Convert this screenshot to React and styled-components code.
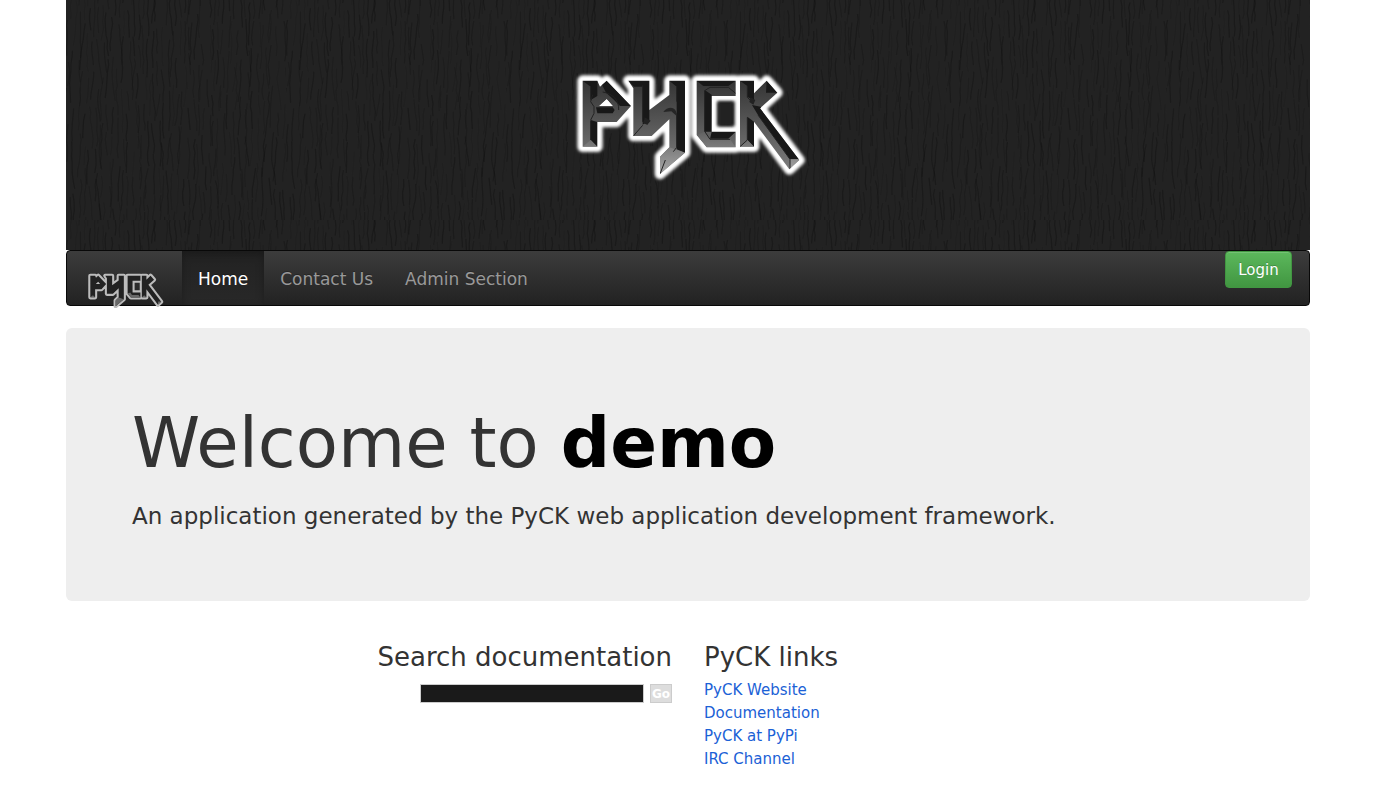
import React from 'react';
import styled, { createGlobalStyle } from 'styled-components';

const GlobalStyle = createGlobalStyle`
  *, *::before, *::after { box-sizing: border-box; }
  body {
    margin: 0;
    background: #fff;
    color: #333;
    font-family: Verdana, "DejaVu Sans", sans-serif;
    font-size: 15px;
    line-height: 23px;
  }
`;

const Page = styled.div`
  padding: 0 80px 24px 66px;
`;

const Banner = styled.header`
  position: relative;
  display: flex;
  align-items: center;
  justify-content: center;
  height: 250px;
  background: #222;
`;

const Grain = styled.svg`
  position: absolute;
  inset: 0;
  width: 100%;
  height: 100%;
`;

const BannerLogo = styled.svg`
  position: relative;
  width: 260px;
  height: 130px;
`;

const Navbar = styled.nav`
  display: flex;
  align-items: stretch;
  height: 56px;
  padding: 0 17px 0 20px;
  border: 1px solid #080808;
  border-radius: 4px;
  background: linear-gradient(#3c3c3c, #222);
`;

const Brand = styled.a`
  width: 95px;
  padding-top: 21px;
`;

const BrandLogo = styled.svg`
  display: block;
  width: 78px;
  height: 36px;
`;

const NavList = styled.ul`
  display: flex;
  flex: 1;
  margin: 0;
  padding: 0;
  list-style: none;
`;

const NavLink = styled.a`
  display: block;
  height: 100%;
  padding: 0 16px;
  font-size: 17px;
  line-height: 56px;
  text-decoration: none;
  text-shadow: 0 -1px 0 rgba(0, 0, 0, 0.25);
  color: ${(p) => (p.$active ? '#fff' : '#999')};
  background: ${(p) => (p.$active ? 'linear-gradient(#222, #282828)' : 'none')};
  box-shadow: ${(p) => (p.$active ? 'inset 0 3px 9px rgba(0, 0, 0, 0.25)' : 'none')};
`;

const LoginButton = styled.button`
  align-self: flex-start;
  min-width: 67px;
  height: 37px;
  padding: 0 12px;
  border: 1px solid #419641;
  border-radius: 4px;
  background: linear-gradient(#5cb85c, #419641);
  box-shadow: inset 0 1px 0 rgba(255, 255, 255, 0.15);
  color: #fff;
  font: 15px Verdana, "DejaVu Sans", sans-serif;
  text-shadow: 0 -1px 0 rgba(0, 0, 0, 0.2);
`;

const Hero = styled.section`
  margin-top: 22px;
  padding: 77px 66px 65px;
  border-radius: 6px;
  background: #eee;
`;

const HeroTitle = styled.h1`
  margin: 0 0 16px;
  font-size: 69px;
  font-weight: 400;
  line-height: 76px;

  strong { color: #000; }
`;

const HeroText = styled.p`
  margin: 0;
  font-size: 23px;
  line-height: 39px;
`;

const Columns = styled.main`
  display: flex;
  gap: 32px;
  margin-top: 39px;
`;

const SearchColumn = styled.section`
  flex: 0 0 606px;
  text-align: right;
`;

const LinksColumn = styled.section`
  flex: 1;
`;

const ColumnTitle = styled.h2`
  margin: 0 0 5px;
  font-size: 26px;
  font-weight: 400;
  line-height: 34px;
`;

const SearchForm = styled.form`
  display: flex;
  justify-content: flex-end;
  gap: 6px;
  padding-top: 5px;
`;

const SearchInput = styled.input`
  width: 224px;
  height: 19px;
  padding: 0 2px;
  border: 1px solid #ccc;
  background: #1a1a1a;
  color: #ccc;
  font-size: 12px;
`;

const GoButton = styled.button`
  width: 22px;
  height: 19px;
  padding: 0;
  border: 1px solid #ccc;
  background: #ddd;
  color: #fff;
  font: bold 12px Verdana, "DejaVu Sans", sans-serif;
`;

const LinkList = styled.ul`
  margin: 0;
  padding: 0;
  list-style: none;
`;

const DocLink = styled.a`
  color: #1b61d6;
  text-decoration: none;
`;

const letters = [
  'M68 62H112L120 80L140 62L213 138L170 186H112V260H68Z M118 138H158L140 118Z',
  'M205 62H268V150L328 105V62H375V278L300 342V290L328 262V178L275 228H220V85Z',
  'M410 62H527V108H455V215H527V262H440L410 225Z',
  'M540 62H582V100L620 62L652 98L600 145L718 300L688 328L582 185V260H540Z',
].join(' ');

/* faces in shadow */
const darkFaces =
  'M68 62H112V108L92 120V80Z M126 74L140 62L213 138H180L160 118L138 98Z M92 180L112 186V260L92 240Z M108 142H158L164 150L158 160H112Z M205 62H268V180L248 194V80H222Z M375 62V278L350 268V78Z M328 62H375L350 80Z M410 62H527L505 78H430Z M434 90L455 104V215H434Z M455 215H527L505 236H450Z M540 62H582V122L562 110V78Z M582 185V260L562 240V170Z M620 62L652 98L618 98Z M576 135L602 140L718 298H690L594 165Z';

/* faces that catch the most light */
const lightFaces =
  'M68 260L92 240L112 260Z M300 290L328 262L375 278L300 342Z M410 225L434 215L450 238H510L527 262H440Z M540 260L562 240L582 260Z M690 298H718L688 328Z';

const edges =
  'M92 80V118M92 182V240M98 104L92 125L102 140V160L92 180M128 96C155 100 178 118 176 150M248 76V185L262 192M220 228L248 196M350 78V125M350 160V262L340 275M300 342L316 300M434 214V92L450 82H505L527 100M434 214L450 238H510M562 78V112L572 122M562 172V240L540 260M594 165L690 298V328';

function PyckMark() {
  return (
    <>
      <defs>
        <filter id="banner-glow" x="-20%" y="-20%" width="140%" height="140%">
          <feGaussianBlur stdDeviation="5" />
        </filter>
        <filter id="banner-soft" x="-5%" y="-5%" width="110%" height="110%">
          <feGaussianBlur stdDeviation="2" />
        </filter>
        <linearGradient id="metal" gradientUnits="userSpaceOnUse" x1="0" y1="62" x2="0" y2="342">
          <stop offset="0" stopColor="#343434" />
          <stop offset="0.5" stopColor="#5a5a5a" />
          <stop offset="1" stopColor="#808080" />
        </linearGradient>
        <linearGradient id="lit" gradientUnits="userSpaceOnUse" x1="0" y1="215" x2="0" y2="342">
          <stop offset="0" stopColor="#626262" />
          <stop offset="1" stopColor="#a8a8a8" />
        </linearGradient>
        <clipPath id="letter-shape">
          <path d={letters} clipRule="evenodd" />
        </clipPath>
      </defs>
      <path d={letters} fill="#fff" stroke="#fff" strokeWidth="32" strokeLinejoin="round" filter="url(#banner-glow)" />
      <path d={letters} fill="#fff" stroke="#fff" strokeWidth="14" strokeLinejoin="round" filter="url(#banner-soft)" />
      <rect x="476" y="126" width="42" height="72" fill="#242424" filter="url(#banner-glow)" />
      <path d={letters} fill="url(#metal)" fillRule="evenodd" />
      <g clipPath="url(#letter-shape)">
        <path d={darkFaces} fill="#181818" />
        <path d={lightFaces} fill="url(#lit)" />
        <path d={edges} fill="none" stroke="#222" strokeWidth="3" />
        <path d="M310 156C325 136 352 140 350 168L334 154Z" fill="#262626" />
        <path d="M254 172L272 182L262 194L250 190Z M572 112L586 120L580 134L568 126Z" fill="#222" />
      </g>
      <path d="M118 138H158L140 118Z" fill="#fff" />
    </>
  );
}

function SmallPyckMark() {
  return (
    <>
      <filter id="brand-soft" x="-10%" y="-10%" width="120%" height="120%">
        <feGaussianBlur stdDeviation="4" />
      </filter>
      <g filter="url(#brand-soft)">
        <path d={letters} fill="#bcbcbc" stroke="#bcbcbc" strokeWidth="38" strokeLinejoin="round" />
        <path d={letters} fill="#202020" fillRule="evenodd" />
        <path d={lightFaces} fill="#686868" />
      </g>
    </>
  );
}

/* Thin, wandering vertical cracks for the bark texture tile */
function makeBark(size) {
  let seed = 20731;
  const random = () => {
    seed = (seed * 48271) % 2147483647;
    return seed / 2147483647;
  };
  const cracks = [];
  for (let column = 0; column < size; column += 5) {
    let top = -random() * 40;
    while (top < size) {
      let x = column + random() * 5;
      let y = top;
      const length = 16 + random() * 28;
      let d = `M${x.toFixed(1)} ${y.toFixed(1)}`;
      while (y < top + length) {
        x += (random() - 0.5) * 3;
        y += 5 + random() * 5;
        d += `L${x.toFixed(1)} ${y.toFixed(1)}`;
      }
      cracks.push({ d, opacity: 0.1 + random() * 0.24 });
      top = y + random() * 8;
    }
  }
  return cracks;
}

const BARK_SIZE = 220;
const bark = makeBark(BARK_SIZE);

const navItems = [
  { label: 'Home', active: true },
  { label: 'Contact Us' },
  { label: 'Admin Section' },
];

const docLinks = ['PyCK Website', 'Documentation', 'PyCK at PyPi', 'IRC Channel'];

export default function App() {
  return (
    <>
      <GlobalStyle />
      <Page>
        <Banner>
          <Grain aria-hidden="true">
            <pattern id="bark" width={BARK_SIZE} height={BARK_SIZE} patternUnits="userSpaceOnUse">
              {bark.map((crack) => (
                <path
                  key={crack.d}
                  d={crack.d}
                  fill="none"
                  stroke="#080808"
                  strokeWidth="1.4"
                  strokeLinejoin="round"
                  opacity={crack.opacity}
                />
              ))}
            </pattern>
            <rect width="100%" height="100%" fill="url(#bark)" />
          </Grain>
          <BannerLogo viewBox="-6 0 780 390" role="img" aria-label="PyCK">
            <PyckMark />
          </BannerLogo>
        </Banner>

        <Navbar>
          <Brand href="#" aria-label="PyCK">
            <BrandLogo viewBox="38 28 714 330" aria-hidden="true">
              <SmallPyckMark />
            </BrandLogo>
          </Brand>
          <NavList>
            {navItems.map((item) => (
              <li key={item.label}>
                <NavLink href="#" $active={item.active}>{item.label}</NavLink>
              </li>
            ))}
          </NavList>
          <LoginButton type="button">Login</LoginButton>
        </Navbar>

        <Hero>
          <HeroTitle>Welcome to <strong>demo</strong></HeroTitle>
          <HeroText>An application generated by the PyCK web application development framework.</HeroText>
        </Hero>

        <Columns>
          <SearchColumn>
            <ColumnTitle>Search documentation</ColumnTitle>
            <SearchForm>
              <SearchInput type="text" aria-label="Search documentation" />
              <GoButton type="button">Go</GoButton>
            </SearchForm>
          </SearchColumn>
          <LinksColumn>
            <ColumnTitle>PyCK links</ColumnTitle>
            <LinkList>
              {docLinks.map((label) => (
                <li key={label}><DocLink href="#">{label}</DocLink></li>
              ))}
            </LinkList>
          </LinksColumn>
        </Columns>
      </Page>
    </>
  );
}
